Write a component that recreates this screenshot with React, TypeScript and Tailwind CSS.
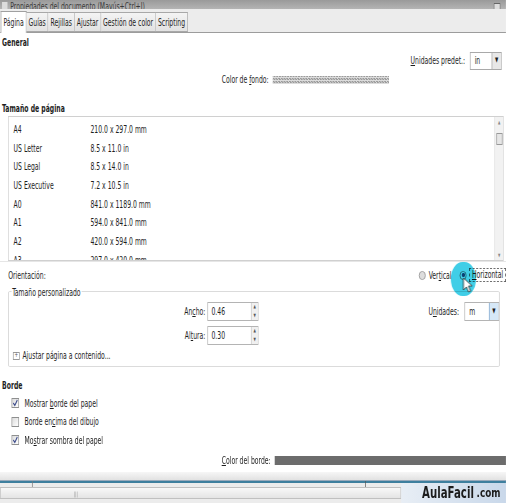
import React from 'react';

// the dialog was captured from a video that squeezes it sideways,
// so the whole panel is laid out wide and narrowed with scale-x
const font = '"DejaVu Sans Condensed", "Liberation Sans", sans-serif';

const sizes = [
  ['A4', '210.0 x 297.0 mm'],
  ['US Letter', '8.5 x 11.0 in'],
  ['US Legal', '8.5 x 14.0 in'],
  ['US Executive', '7.2 x 10.5 in'],
  ['A0', '841.0 x 1189.0 mm'],
  ['A1', '594.0 x 841.0 mm'],
  ['A2', '420.0 x 594.0 mm'],
  ['A3', '297.0 x 420.0 mm'],
];

const tabs = ['Guías', 'Rejillas', 'Ajustar', 'Gestión de color', 'Scripting'];

function Check({ checked, label }: { checked: boolean; label: React.ReactNode }) {
  return (
    <div className="flex h-[18.5px] items-center gap-[8px] pl-[17px]">
      <span className="flex h-[10px] w-[11px] items-center justify-center border border-[#8e8f8f] bg-gradient-to-br from-[#dcdcdc] to-white">
        {checked && (
          <svg width="9" height="8" viewBox="0 0 9 8">
            <path d="M1.5 4 L3.8 6.3 L7.5 1" stroke="#3b4a8a" strokeWidth="1.4" fill="none" />
          </svg>
        )}
      </span>
      <span>{label}</span>
    </div>
  );
}

function Spin() {
  return (
    <div className="flex h-full w-[10px] flex-col border-l border-[#c8c8c8] bg-[#f0f0f0]">
      <div className="flex flex-1 items-center justify-center text-[5px] leading-none text-[#555]">▲</div>
      <div className="flex flex-1 items-center justify-center text-[5px] leading-none text-[#555]">▼</div>
    </div>
  );
}

export default function App() {
  return (
    <div className="h-[503px] w-[506px] overflow-hidden bg-white">
      <div
        className="relative flex h-[503px] w-[744px] origin-top-left scale-x-[0.68] flex-col bg-white text-[10px] text-[#1e1e1e]"
        style={{ fontFamily: font }}
      >
        {/* title bar */}
        <div className="flex h-[9px] shrink-0 items-end overflow-hidden bg-gradient-to-b from-[#9a9a9a] to-[#b4b4b4] pl-[3px]">
          <span className="mr-[4px] h-[7px] w-[8px] bg-[#dcdcdc]" />
          <span className="-mb-[4px] text-[10px] leading-[12px] text-[#3a3a3a]">Propiedades del documento (Mayús+Ctrl+J)</span>
          <span className="ml-auto mr-[8px] -mb-[2px] h-[8px] w-[10px] border border-[#666] bg-[#ddd]" />
        </div>

        {/* tabs */}
        <div className="flex h-[24px] shrink-0 items-end border-b border-[#9c9c9c] bg-[#ececec] pl-px">
          <div className="-mb-px flex h-[22px] items-center border border-b-0 border-[#a0a0a0] bg-white px-[3px]">Página</div>
          {tabs.map((t) => (
            <div
              key={t}
              className="flex h-[20px] items-center border border-l-0 border-[#a8a8a8] bg-gradient-to-b from-[#f4f4f4] to-[#e2e2e2] px-[3px]"
            >
              {t}
            </div>
          ))}
        </div>

        {/* General */}
        <div className="flex h-[18px] shrink-0 items-center pl-[3px] font-bold">General</div>
        <div className="flex h-[19px] shrink-0 items-center justify-end gap-[7px] pr-[6px]">
          <span>
            <u>U</u>nidades predet.:
          </span>
          <div className="flex h-[18px] w-[47px] items-center border border-[#a9a9a9] bg-white">
            <span className="flex-1 pl-[6px]">in</span>
            <span className="flex h-full w-[14px] items-center justify-center border-l border-[#a9a9a9] bg-[#e8e8e8] text-[7px]">▼</span>
          </div>
        </div>
        <div className="flex h-[19px] shrink-0 items-center gap-[6px] pl-[326px]">
          <span>
            Color de <u>f</u>ondo:
          </span>
          <span className="h-[8px] w-[171px] bg-[repeating-conic-gradient(#9a9a9a_0_25%,#dcdcdc_0_50%)] bg-[length:4px_3px]" />
        </div>

        {/* Tamaño de página */}
        <div className="mt-[12px] flex h-[15px] shrink-0 items-center pl-[3px] font-bold">Tamaño de página</div>
        <div className="ml-[12px] mr-[3px] flex h-[145px] shrink-0 border border-[#d0d0d0]">
          <div className="flex-1 overflow-hidden pt-[3px]">
            {sizes.map(([n, s]) => (
              <div key={n} className="flex h-[18.7px] items-center">
                <span className="w-[120px] pl-[7px]">{n}</span>
                <span>{s}</span>
              </div>
            ))}
          </div>
          <div className="flex w-[13px] flex-col items-center border-l border-[#e4e4e4] bg-[#f2f2f2]">
            <span className="mt-[2px] text-[5px] text-[#888]">▲</span>
            <span className="mt-[6px] h-[12px] w-[9px] border border-[#999] bg-[#e6e6e6]" />
            <span className="mb-px mt-auto text-[5px] text-[#888]">▼</span>
          </div>
        </div>

        {/* Orientación */}
        <div className="flex h-[24px] shrink-0 items-center border-t border-[#e6e6e6] pl-[12px] pt-[3px]">
          <span>Orientación:</span>
          <div className="ml-auto flex items-center gap-[4px]">
            <span className="h-[9px] w-[10px] rounded-full border border-[#999] bg-[#ddd]" />
            <span>
              Ver<u>t</u>ical
            </span>
            <span className="ml-[8px] flex h-[9px] w-[10px] items-center justify-center rounded-full border border-[#777] bg-white">
              <span className="h-[4px] w-[5px] rounded-full bg-[#2d4f80]" />
            </span>
            <span className="border border-dashed border-[#555] px-[3px] leading-[12px]">
              <u>H</u>orizontal
            </span>
          </div>
        </div>

        {/* Tamaño personalizado */}
        <div className="relative ml-[12px] mr-[9px] mt-[6px] h-[76px] shrink-0 rounded-[2px] border border-[#d4d4d4]">
          <span className="absolute -top-[7px] left-[4px] bg-white px-px">Tamaño personalizado</span>
          <div className="flex h-full flex-col pt-[9px]">
            <div className="flex h-[20px] items-center">
              <span className="w-[289px] text-right">
                An<u>c</u>ho:
              </span>
              <div className="ml-[3px] flex h-[19px] w-[75px] items-center border border-[#b4b4b4]">
                <span className="flex-1 pl-[5px]">0.46</span>
                <Spin />
              </div>
              <span className="ml-auto mr-[8px]">
                U<u>n</u>idades:
              </span>
              <div className="flex h-[19px] w-[51px] items-center border border-[#b4b4b4]">
                <span className="flex-1 pl-[6px]">m</span>
                <span className="flex h-full w-[14px] items-center justify-center border-l border-[#7ea4cc] bg-[#d6e8f7] text-[7px]">▼</span>
              </div>
            </div>
            <div className="mt-[4px] flex h-[20px] items-center">
              <span className="w-[289px] text-right">
                Al<u>t</u>ura:
              </span>
              <div className="ml-[3px] flex h-[19px] w-[75px] items-center border border-[#b4b4b4]">
                <span className="flex-1 pl-[5px]">0.30</span>
                <Spin />
              </div>
            </div>
            <div className="mt-[3px] flex items-center gap-[4px] pl-[6px]">
              <span className="flex h-[8px] w-[10px] items-center justify-center border border-[#999] text-[7px] leading-none text-[#555]">+</span>
              <span>Ajustar página a contenido...</span>
            </div>
          </div>
        </div>

        {/* Borde */}
        <div className="mt-[10px] flex h-[17px] shrink-0 items-center pl-[3px] font-bold">Borde</div>
        <Check checked label={<>Mostrar <u>b</u>orde del papel</>} />
        <Check checked={false} label={<>Borde en<u>c</u>ima del dibujo</>} />
        <Check checked label={<>Mo<u>s</u>trar sombra del papel</>} />
        <div className="mt-[3px] flex h-[16px] shrink-0 items-center gap-[6px] pl-[326px]">
          <span>
            <u>C</u>olor del borde:
          </span>
          <span className="h-[9px] flex-1 bg-[#6c6c6c]" />
        </div>

        {/* bottom strip */}
        <div className="mt-[3px] flex-1 bg-gradient-to-b from-[#f6f6f6] to-[#e2e2e2]" />
        <div className="relative h-[3px] shrink-0 border-t border-[#9ab] bg-[#3e7f9e]">
          <span className="absolute left-[47px] top-0 h-[6px] w-px bg-[#777]" />
          <span className="absolute left-[537px] top-0 h-[6px] w-px bg-[#555]" />
        </div>
        <div className="flex h-[20px] shrink-0 items-center bg-[#ececec]">
          <div className="flex h-[12px] w-[590px] items-center border border-[#c0c0c0] bg-gradient-to-b from-[#f8f8f8] to-[#e4e4e4] pl-[108px] text-[6px] text-[#888]">
            |||
          </div>
          <div
            className="flex h-full flex-1 items-center justify-end bg-gradient-to-r from-[#e8eef5] to-[#c9d8ea] pr-[8px] text-[15px] font-bold text-[#1c1c1c]"
            style={{ fontFamily: '"DejaVu Sans", sans-serif' }}
          >
            AulaFacil<span className="ml-[4px] text-[13px]">.com</span>
          </div>
        </div>

        {/* cursor highlight over the Horizontal radio */}
        <div className="pointer-events-none absolute left-[663px] top-[262px] h-[34px] w-[37px] rounded-full bg-[#1fc6e3]/85 mix-blend-multiply" />
        <svg className="absolute left-[680px] top-[277px]" width="15" height="16" viewBox="0 0 15 16">
          <path d="M1.5 1 L1.5 13 L6 10 L9 15 L12 14 L9 9 L14.5 9 Z" fill="white" stroke="#222" strokeWidth="0.9" />
        </svg>
      </div>
    </div>
  );
}
